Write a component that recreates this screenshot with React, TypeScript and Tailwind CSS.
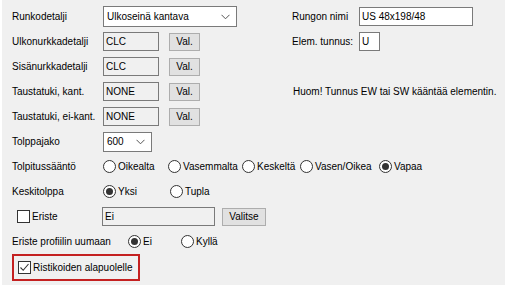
import React from "react";

function Radio({ checked, label, w }: { checked?: boolean; label: string; w?: string }) {
  return (
    <div className={`flex items-center ${w ?? ""}`}>
      <span className="w-[13px] h-[13px] shrink-0 rounded-full border border-[#333333] bg-white flex items-center justify-center">
        {checked && <span className="w-[7px] h-[7px] rounded-full bg-[#333333]" />}
      </span>
      <span className="ml-[2px] whitespace-nowrap">{label}</span>
    </div>
  );
}

function Check({ checked }: { checked?: boolean }) {
  return (
    <span className="w-[13px] h-[13px] shrink-0 border border-[#333333] bg-white flex items-center justify-center">
      {checked && (
        <svg width="11" height="11" viewBox="0 0 11 11">
          <path d="M1.5 5.5 L4.2 8.3 L9.5 2" fill="none" stroke="#333333" strokeWidth="1.1" />
        </svg>
      )}
    </span>
  );
}

function Box({ text, w, white }: { text: string; w: string; white?: boolean }) {
  return (
    <div className={`${w} h-[19px] border border-[#7a7a7a] ${white ? "bg-white" : "bg-[#f0f0f0]"} flex items-center pl-[2px] shrink-0`}>
      {text}
    </div>
  );
}

function Btn({ text, w, cls }: { text: string; w: string; cls?: string }) {
  return (
    <div className={`${w} h-[18px] border border-[#adadad] bg-[#e1e1e1] flex items-center justify-center shrink-0 ${cls ?? ""}`}>
      {text}
    </div>
  );
}

function Combo({ text, w, h }: { text: string; w: string; h: string }) {
  return (
    <div className={`${w} ${h} border border-[#7a7a7a] bg-white flex items-center justify-between pl-[3px] pr-[6px] shrink-0`}>
      <span>{text}</span>
      <svg width="9" height="6" viewBox="0 0 9 6">
        <path d="M0.5 0.8 L4.5 4.8 L8.5 0.8" fill="none" stroke="#555" strokeWidth="1" />
      </svg>
    </div>
  );
}

export default function App() {
  return (
    <div className="w-[509px] h-[290px] bg-white pl-[2px] font-['Liberation_Sans',Arial,sans-serif] text-[10px] text-black leading-none">
      <div className="w-[503px] h-[285px] bg-[#f0f0f0] pl-[10px] pt-[4px] flex flex-col">
        <div className="flex items-center h-[25px]">
          <div className="w-[91px] shrink-0">Runkodetalji</div>
          <Combo text="Ulkoseinä kantava" w="w-[134px]" h="h-[21px]" />
          <div className="ml-[55px] w-[67px] shrink-0">Rungon nimi</div>
          <Box text="US 48x198/48" w="w-[114px]" white />
        </div>
        <div className="flex items-center h-[25px]">
          <div className="w-[91px] shrink-0">Ulkonurkkadetalji</div>
          <Box text="CLC" w="w-[56px]" />
          <Btn text="Val." w="w-[31px]" cls="ml-[10px]" />
          <div className="ml-[92px] w-[67px] shrink-0">Elem. tunnus:</div>
          <Box text="U" w="w-[21px]" white />
        </div>
        <div className="flex items-center h-[25px]">
          <div className="w-[91px] shrink-0">Sisänurkkadetalji</div>
          <Box text="CLC" w="w-[56px]" />
          <Btn text="Val." w="w-[31px]" cls="ml-[10px]" />
        </div>
        <div className="flex items-center h-[25px]">
          <div className="w-[91px] shrink-0">Taustatuki, kant.</div>
          <Box text="NONE" w="w-[56px]" />
          <Btn text="Val." w="w-[31px]" cls="ml-[10px]" />
          <div className="ml-[93px] whitespace-nowrap">Huom! Tunnus EW tai SW kääntää elementin.</div>
        </div>
        <div className="flex items-center h-[25px]">
          <div className="w-[91px] shrink-0">Taustatuki, ei-kant.</div>
          <Box text="NONE" w="w-[56px]" />
          <Btn text="Val." w="w-[31px]" cls="ml-[10px]" />
        </div>
        <div className="flex items-center h-[25px]">
          <div className="w-[91px] shrink-0">Tolppajako</div>
          <Combo text="600" w="w-[49px]" h="h-[20px]" />
        </div>
        <div className="flex items-center h-[25px]">
          <div className="w-[91px] shrink-0">Tolpitussääntö</div>
          <Radio label="Oikealta" w="w-[65px]" />
          <Radio label="Vasemmalta" w="w-[74px]" />
          <Radio label="Keskeltä" w="w-[58px]" />
          <Radio label="Vasen/Oikea" w="w-[79px]" />
          <Radio label="Vapaa" checked />
        </div>
        <div className="flex items-center h-[25px]">
          <div className="w-[91px] shrink-0">Keskitolppa</div>
          <Radio label="Yksi" checked w="w-[67px]" />
          <Radio label="Tupla" />
        </div>
        <div className="flex items-center h-[25px]">
          <div className="w-[90px] shrink-0 pl-[5px] flex items-center">
            <Check />
            <span className="ml-[2px]">Eriste</span>
          </div>
          <Box text="Ei" w="w-[113px]" />
          <Btn text="Valitse" w="w-[44px]" cls="ml-[7px]" />
        </div>
        <div className="flex items-center h-[25px]">
          <div className="w-[116px] shrink-0">Eriste profiilin uumaan</div>
          <Radio label="Ei" checked w="w-[53px]" />
          <Radio label="Kyllä" />
        </div>
        <div className="flex items-center h-[27px]">
          <div className="w-[128px] h-[27px] border-2 border-[#c42020] flex items-center pl-[4px]">
            <Check checked />
            <span className="ml-[2px]">Ristikoiden alapuolelle</span>
          </div>
        </div>
      </div>
    </div>
  );
}
